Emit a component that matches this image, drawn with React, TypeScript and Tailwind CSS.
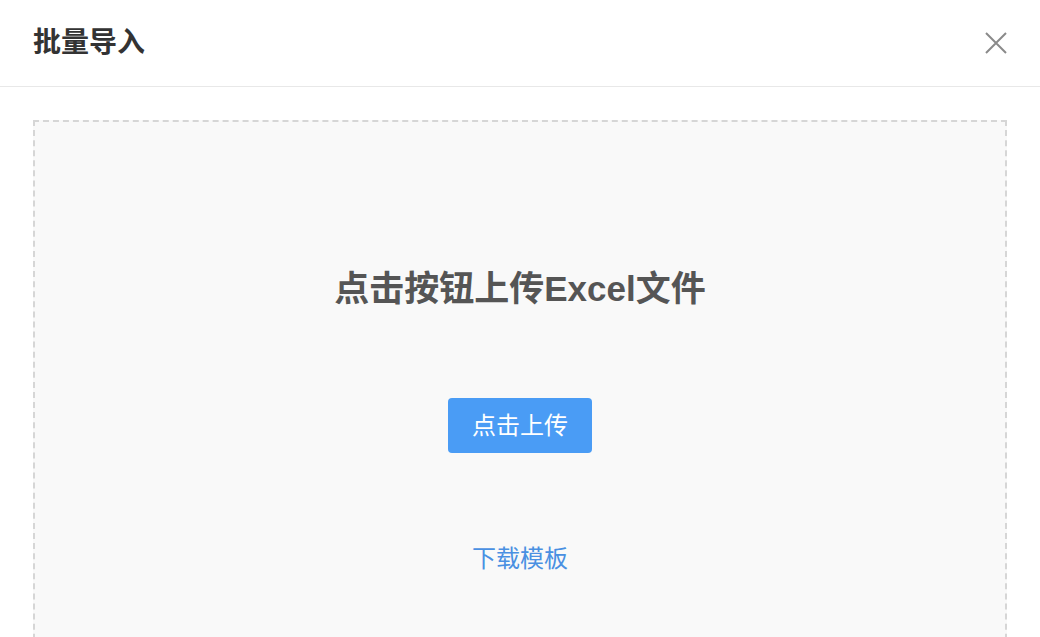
import React from "react";

export default function App() {
  return (
    <div
      className="w-[1040px] h-[637px] overflow-hidden bg-white"
      style={{ fontFamily: '"Liberation Sans", "Noto Sans CJK SC", sans-serif' }}
    >
      {/* Header */}
      <div className="flex items-center justify-between h-[87px] px-[33px] border-b border-[#e8e8e8]">
        <h2 className="text-[28px] font-bold text-[#333]">批量导入</h2>
        <button className="text-[#8a8a8a] -mr-[1px]" aria-label="关闭">
          <svg width="24" height="24" viewBox="0 0 24 24" fill="none" stroke="currentColor" strokeWidth="2">
            <path d="M2 2 L22 22 M22 2 L2 22" />
          </svg>
        </button>
      </div>

      {/* Body */}
      <div className="px-[33px] pt-[33px]">
        <div className="h-[560px] border-2 border-dashed border-[#d6d6d6] bg-[#f9f9f9] flex flex-col items-center pt-[149px]">
          <h3 className="text-[35px] font-bold text-[#555] leading-none">点击按钮上传Excel文件</h3>
          <button className="mt-[92px] w-[144px] h-[55px] rounded-[4px] bg-[#4a9cf5] text-white text-[24px]">
            点击上传
          </button>
          <a className="mt-[88px] text-[24px] text-[#4a90e2] cursor-pointer">下载模板</a>
        </div>
      </div>
    </div>
  );
}
